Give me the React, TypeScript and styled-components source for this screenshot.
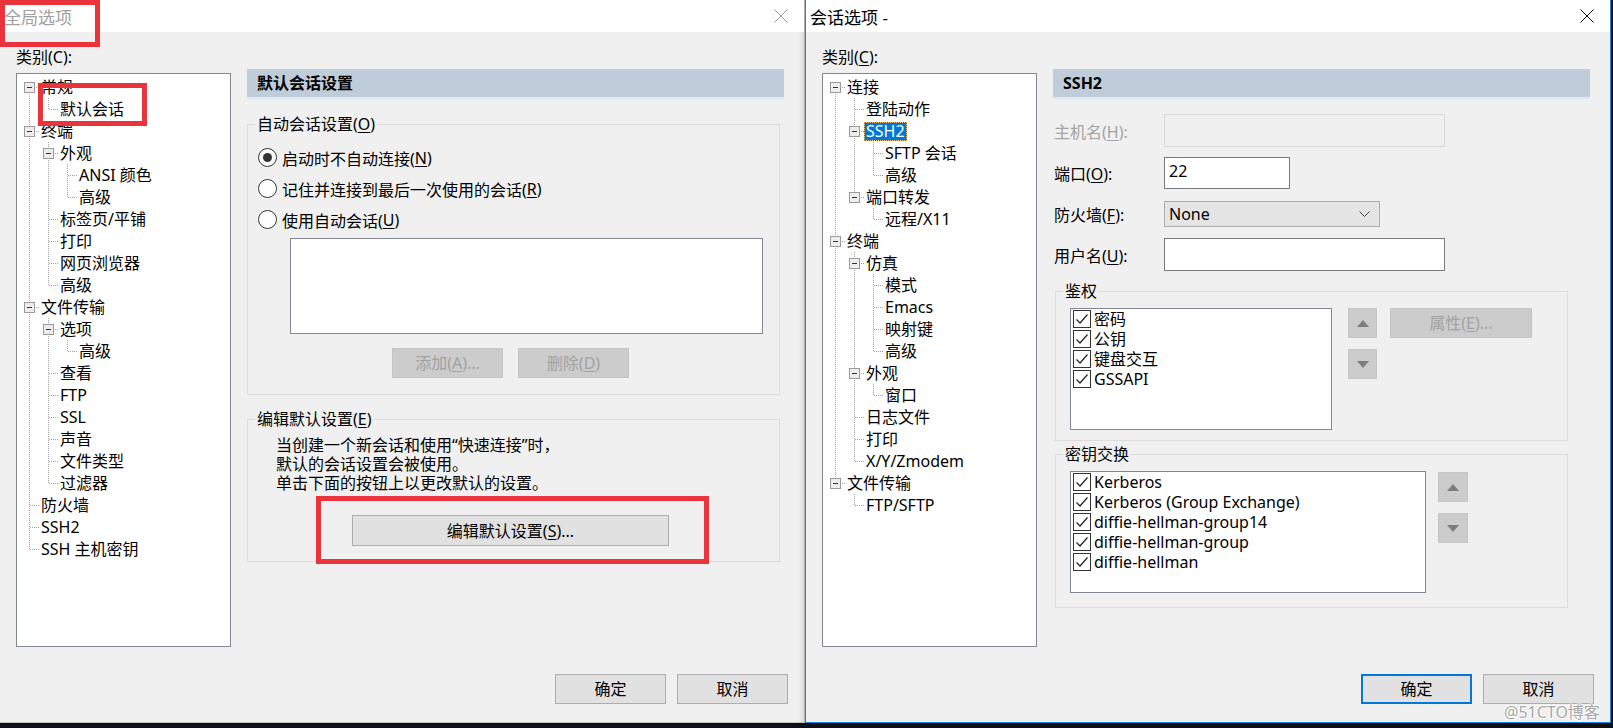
import React from "react";
import styled, { createGlobalStyle } from "styled-components";

const GlobalStyle = createGlobalStyle`
  html, body {
    margin: 0;
    padding: 0;
    background: #0e1016;
  }
  body {
    font-family: "Noto Sans", "Noto Sans CJK SC", sans-serif;
    font-size: 16px;
    color: #000;
  }
`;

type TreeNode = { label: string; children?: TreeNode[]; selected?: boolean; marked?: boolean };
type Link = "tee" | "last" | "first";
type FlatRow = {
  label: string;
  guides: boolean[];
  link: Link;
  open: boolean;
  selected?: boolean;
  marked?: boolean;
};

// turn the nested tree into rows with the guide lines each row needs
const flatten = (nodes: TreeNode[], guides: boolean[] = []): FlatRow[] =>
  nodes.flatMap((node, i) => {
    const last = i === nodes.length - 1;
    const link: Link = last ? "last" : guides.length === 0 && i === 0 ? "first" : "tee";
    const row: FlatRow = {
      label: node.label,
      guides,
      link,
      open: !!node.children,
      selected: node.selected,
      marked: node.marked,
    };
    return [row, ...(node.children ? flatten(node.children, [...guides, !last]) : [])];
  });

const globalTree: TreeNode[] = [
  { label: "常规", children: [{ label: "默认会话", marked: true }] },
  {
    label: "终端",
    children: [
      { label: "外观", children: [{ label: "ANSI 颜色" }, { label: "高级" }] },
      { label: "标签页/平铺" },
      { label: "打印" },
      { label: "网页浏览器" },
      { label: "高级" },
    ],
  },
  {
    label: "文件传输",
    children: [
      { label: "选项", children: [{ label: "高级" }] },
      { label: "查看" },
      { label: "FTP" },
      { label: "SSL" },
      { label: "声音" },
      { label: "文件类型" },
      { label: "过滤器" },
    ],
  },
  { label: "防火墙" },
  { label: "SSH2" },
  { label: "SSH 主机密钥" },
];

const sessionTree: TreeNode[] = [
  {
    label: "连接",
    children: [
      { label: "登陆动作" },
      { label: "SSH2", selected: true, children: [{ label: "SFTP 会话" }, { label: "高级" }] },
      { label: "端口转发", children: [{ label: "远程/X11" }] },
    ],
  },
  {
    label: "终端",
    children: [
      {
        label: "仿真",
        children: [{ label: "模式" }, { label: "Emacs" }, { label: "映射键" }, { label: "高级" }],
      },
      { label: "外观", children: [{ label: "窗口" }] },
      { label: "日志文件" },
      { label: "打印" },
      { label: "X/Y/Zmodem" },
    ],
  },
  { label: "文件传输", children: [{ label: "FTP/SFTP" }] },
];

const authMethods = ["密码", "公钥", "键盘交互", "GSSAPI"];
const kexMethods = [
  "Kerberos",
  "Kerberos (Group Exchange)",
  "diffie-hellman-group14",
  "diffie-hellman-group",
  "diffie-hellman",
];

const Screen = styled.div`
  position: relative;
  display: flex;
  width: 1613px;
  height: 728px;
  overflow: hidden;
`;

const Window = styled.div<{ $active?: boolean }>`
  flex: none;
  width: 806px;
  height: 723px;
  box-sizing: border-box;
  display: flex;
  flex-direction: column;
  background: #f0f0f0;
  border: 1px solid ${(p) => (p.$active ? "#1883d7" : "#c4c4c4")};
  border-top: none;
  box-shadow: ${(p) => (p.$active ? "-3px 0 5px rgba(0, 0, 0, 0.12)" : "none")};
  &:first-child {
    margin-left: -1px;
  }
`;

const TitleBar = styled.div<{ $active?: boolean }>`
  position: relative;
  flex: none;
  height: 32px;
  display: flex;
  align-items: center;
  padding-left: 4px;
  background: #fff;
  font-size: 17px;
  color: ${(p) => (p.$active ? "#000" : "#a0a0a0")};
`;

const CloseBox = styled.div<{ $active?: boolean }>`
  margin-left: auto;
  width: 46px;
  height: 32px;
  display: flex;
  align-items: center;
  justify-content: center;
  color: ${(p) => (p.$active ? "#111" : "#9a9a9a")};
`;

const RedMark = styled.div<{ $l: number; $t: number; $w: number; $h: number }>`
  position: absolute;
  left: ${(p) => p.$l}px;
  top: ${(p) => p.$t}px;
  width: ${(p) => p.$w}px;
  height: ${(p) => p.$h}px;
  box-sizing: border-box;
  border: 5px solid #e8343a;
  z-index: 5;
  pointer-events: none;
`;

const Body = styled.div`
  flex: none;
  display: grid;
  grid-template-columns: 215px 537px;
  column-gap: 16px;
  align-items: start;
  padding: 14px 0 0 16px;
`;

const CategoryLabel = styled.div`
  line-height: 22px;
  white-space: nowrap;
`;

const Key = styled.span`
  text-decoration: underline;
  text-underline-offset: 2px;
`;

const TreeBox = styled.div`
  margin-top: 5px;
  height: 574px;
  box-sizing: border-box;
  border: 1px solid #828790;
  background: #fff;
  padding: 2px 0 0 3px;
`;

const TreeRow = styled.div`
  position: relative;
  display: flex;
  height: 22px;
`;

const CellSvg = styled.svg`
  flex: none;
  display: block;
`;

const TreeLabel = styled.span<{ $selected?: boolean }>`
  margin-top: 2px;
  height: 19px;
  line-height: 19px;
  padding: 0 2px;
  white-space: nowrap;
  background: ${(p) => (p.$selected ? "#0078d7" : "transparent")};
  color: ${(p) => (p.$selected ? "#fff" : "#000")};
  outline: ${(p) => (p.$selected ? "1px dotted #f3c27c" : "none")};
  outline-offset: -1px;
`;

const Panel = styled.div`
  margin-top: 23px;
  display: flex;
  flex-direction: column;
  align-items: flex-start;
`;

const PanelHeader = styled.div`
  align-self: stretch;
  height: 28px;
  line-height: 28px;
  padding-left: 10px;
  background: #bfcddb;
  box-shadow: 0 2px 0 #dfe6ee;
  font-weight: 700;
`;

const Group = styled.fieldset<{ $top: number; $left?: number; $w: number }>`
  position: relative;
  margin: ${(p) => p.$top}px 0 0 ${(p) => p.$left ?? 0}px;
  padding: 0;
  min-width: 0;
  width: ${(p) => p.$w}px;
  box-sizing: border-box;
  border: 1px solid #dcdcdc;
`;

const GroupTitle = styled.legend`
  margin-left: 7px;
  padding: 0 2px;
  line-height: 22px;
  font-size: 16px;
`;

const GroupBody = styled.div<{ $pad: string }>`
  padding: ${(p) => p.$pad};
  display: flex;
  flex-direction: column;
  align-items: flex-start;
`;

const RadioRow = styled.div`
  display: flex;
  align-items: center;
  height: 31px;
  white-space: nowrap;
`;

const RadioDot = styled.span<{ $checked?: boolean }>`
  flex: none;
  width: 19px;
  height: 19px;
  box-sizing: border-box;
  margin-right: 5px;
  border: 1px solid #333;
  border-radius: 50%;
  background: #fff;
  display: grid;
  place-items: center;
  &::after {
    content: "";
    width: 9px;
    height: 9px;
    border-radius: 50%;
    background: ${(p) => (p.$checked ? "#333" : "transparent")};
  }
`;

const ListFrame = styled.div<{ $w: number; $h: number; $left?: number; $top?: number }>`
  flex: none;
  width: ${(p) => p.$w}px;
  height: ${(p) => p.$h}px;
  margin: ${(p) => p.$top ?? 0}px 0 0 ${(p) => p.$left ?? 0}px;
  box-sizing: border-box;
  border: 1px solid #828790;
  background: #fff;
  padding-left: 2px;
`;

const ButtonLine = styled.div<{ $left: number; $top: number; $gap: number }>`
  display: flex;
  gap: ${(p) => p.$gap}px;
  margin: ${(p) => p.$top}px 0 0 ${(p) => p.$left}px;
`;

const PushButton = styled.button<{ $w: number; $h?: number; $default?: boolean }>`
  flex: none;
  width: ${(p) => p.$w}px;
  height: ${(p) => p.$h ?? 30}px;
  box-sizing: border-box;
  padding: 0;
  font-family: inherit;
  font-size: 16px;
  line-height: 20px;
  color: #000;
  background: #e1e1e1;
  border: ${(p) => (p.$default ? "2px solid #0078d7" : "1px solid #adadad")};
  border-radius: 0;
  &:disabled {
    color: #a2a2a2;
    background: #cccccc;
    border-color: #c4c4c4;
  }
`;

const ButtonSlot = styled.div<{ $left: number; $top: number }>`
  position: relative;
  margin: ${(p) => p.$top}px 0 0 ${(p) => p.$left}px;
`;

const Note = styled.div`
  line-height: 19px;
  white-space: nowrap;
`;

const FormRow = styled.div<{ $top: number }>`
  display: grid;
  grid-template-columns: 111px auto;
  align-items: center;
  margin-top: ${(p) => p.$top}px;
`;

const FieldLabel = styled.div<{ $disabled?: boolean }>`
  padding-left: 1px;
  white-space: nowrap;
  color: ${(p) => (p.$disabled ? "#a3a3a3" : "#000")};
`;

const TextBox = styled.div<{ $w: number; $h: number; $disabled?: boolean }>`
  width: ${(p) => p.$w}px;
  height: ${(p) => p.$h}px;
  box-sizing: border-box;
  padding: 2px 4px;
  line-height: 22px;
  border: 1px solid ${(p) => (p.$disabled ? "#d9d9d9" : "#7a7a7a")};
  background: ${(p) => (p.$disabled ? "#f0f0f0" : "#fff")};
`;

const ComboBox = styled.div`
  width: 216px;
  height: 26px;
  box-sizing: border-box;
  display: flex;
  align-items: center;
  justify-content: space-between;
  padding: 0 9px 0 4px;
  border: 1px solid #acacac;
  background: #e5e5e5;
`;

const ListLine = styled.div`
  display: flex;
  align-items: flex-start;
`;

const ArrowStack = styled.div<{ $left: number; $top?: number }>`
  display: flex;
  flex-direction: column;
  gap: 11px;
  margin: ${(p) => p.$top ?? 0}px 0 0 ${(p) => p.$left}px;
`;

const ArrowButton = styled.div<{ $w: number }>`
  width: ${(p) => p.$w}px;
  height: 30px;
  box-sizing: border-box;
  display: grid;
  place-items: center;
  background: #cccccc;
  border: 1px solid #c6c6c6;
`;

const CheckRow = styled.div`
  display: flex;
  align-items: center;
  height: 20px;
  line-height: 20px;
  white-space: nowrap;
`;

const CheckBox = styled.span`
  flex: none;
  width: 18px;
  height: 18px;
  box-sizing: border-box;
  margin-right: 3px;
  border: 1px solid #333;
  background: #fff;
  display: grid;
  place-items: center;
`;

const Footer = styled.div`
  margin-top: auto;
  display: flex;
  justify-content: flex-end;
  gap: 11px;
  padding: 0 16px 18px 0;
`;

const Watermark = styled.div`
  position: absolute;
  left: 1504px;
  top: 701px;
  font-size: 16px;
  line-height: 22px;
  color: #a6a6a6;
  text-shadow: 1px 0 0 #fff, -1px 0 0 #fff, 0 1px 0 #fff, 0 -1px 0 #fff;
  z-index: 10;
`;

const DOT = {
  stroke: "#a0a0a0",
  strokeDasharray: "1 1",
  shapeRendering: "crispEdges" as const,
};

const GuideCell = ({ pipe, link, open }: { pipe?: boolean; link?: Link; open?: boolean }) => (
  <CellSvg width="19" height="22" viewBox="0 0 19 22">
    {(pipe || link === "tee") && <line x1="9.5" y1="0" x2="9.5" y2="22" {...DOT} />}
    {link === "last" && <line x1="9.5" y1="0" x2="9.5" y2="11" {...DOT} />}
    {link === "first" && <line x1="9.5" y1="12" x2="9.5" y2="22" {...DOT} />}
    {link && <line x1="10" y1="11.5" x2="19" y2="11.5" {...DOT} />}
    {open && (
      <>
        <rect x="4.5" y="6.5" width="10" height="10" fill="#ededed" stroke="#9a9a9a" shapeRendering="crispEdges" />
        <line x1="7" y1="11.5" x2="12" y2="11.5" stroke="#333" shapeRendering="crispEdges" />
      </>
    )}
  </CellSvg>
);

const Tree = ({ nodes }: { nodes: TreeNode[] }) => (
  <TreeBox>
    {flatten(nodes).map((r, i) => (
      <TreeRow key={i}>
        {r.guides.map((g, j) => (
          <GuideCell key={j} pipe={g} />
        ))}
        <GuideCell link={r.link} open={r.open} />
        <TreeLabel $selected={r.selected}>{r.label}</TreeLabel>
        {r.marked && <RedMark $l={18} $t={-15} $w={109} $h={43} />}
      </TreeRow>
    ))}
  </TreeBox>
);

const CheckMark = () => (
  <svg width="14" height="14" viewBox="0 0 14 14">
    <path d="M1.5 7.5 L5 11 L12.5 2.5" fill="none" stroke="#222" strokeWidth="1.2" />
  </svg>
);

const CheckList = ({ items, width }: { items: string[]; width: number }) => (
  <ListFrame $w={width} $h={122}>
    {items.map((item) => (
      <CheckRow key={item}>
        <CheckBox>
          <CheckMark />
        </CheckBox>
        {item}
      </CheckRow>
    ))}
  </ListFrame>
);

const Arrow = ({ up }: { up?: boolean }) => (
  <svg width="12" height="7" viewBox="0 0 12 7">
    <path d={up ? "M0 7 L6 0 L12 7 Z" : "M0 0 L12 0 L6 7 Z"} fill="#7e7e7e" />
  </svg>
);

const Arrows = ({ left, top, w }: { left: number; top?: number; w: number }) => (
  <ArrowStack $left={left} $top={top}>
    <ArrowButton $w={w}>
      <Arrow up />
    </ArrowButton>
    <ArrowButton $w={w}>
      <Arrow />
    </ArrowButton>
  </ArrowStack>
);

const CloseIcon = () => (
  <svg width="14" height="14" viewBox="0 0 14 14">
    <path d="M0.5 0.5 L13.5 13.5 M13.5 0.5 L0.5 13.5" stroke="currentColor" strokeWidth="1" />
  </svg>
);

const Chevron = () => (
  <svg width="11" height="6" viewBox="0 0 11 6">
    <path d="M0.5 0.5 L5.5 5.5 L10.5 0.5" fill="none" stroke="#444" strokeWidth="1" />
  </svg>
);

type DialogProps = {
  title: string;
  active?: boolean;
  marked?: boolean;
  tree: TreeNode[];
  children: React.ReactNode;
};

const Dialog = ({ title, active, marked, tree, children }: DialogProps) => (
  <Window $active={active}>
    <TitleBar $active={active}>
      {title}
      <CloseBox $active={active}>
        <CloseIcon />
      </CloseBox>
      {marked && <RedMark $l={0} $t={0} $w={100} $h={47} />}
    </TitleBar>
    <Body>
      <div>
        <CategoryLabel>
          类别({active ? <Key>C</Key> : "C"}):
        </CategoryLabel>
        <Tree nodes={tree} />
      </div>
      <Panel>{children}</Panel>
    </Body>
    <Footer>
      <PushButton $w={111} $default={active}>
        确定
      </PushButton>
      <PushButton $w={111}>取消</PushButton>
    </Footer>
  </Window>
);

const DefaultSessionPanel = () => (
  <>
    <PanelHeader>默认会话设置</PanelHeader>
    <Group $top={16} $w={533}>
      <GroupTitle>
        自动会话设置(<Key>O</Key>)
      </GroupTitle>
      <GroupBody $pad="7px 0 16px 10px">
        <RadioRow>
          <RadioDot $checked />
          启动时不自动连接(<Key>N</Key>)
        </RadioRow>
        <RadioRow>
          <RadioDot />
          记住并连接到最后一次使用的会话(<Key>R</Key>)
        </RadioRow>
        <RadioRow>
          <RadioDot />
          使用自动会话(<Key>U</Key>)
        </RadioRow>
        <ListFrame $w={473} $h={96} $left={32} $top={3} />
        <ButtonLine $left={134} $top={14} $gap={15}>
          <PushButton $w={111} disabled>
            添加(<Key>A</Key>)...
          </PushButton>
          <PushButton $w={111} disabled>
            删除(<Key>D</Key>)
          </PushButton>
        </ButtonLine>
      </GroupBody>
    </Group>
    <Group $top={13} $w={533}>
      <GroupTitle>
        编辑默认设置(<Key>E</Key>)
      </GroupTitle>
      <GroupBody $pad="6px 0 15px 28px">
        <Note>
          当创建一个新会话和使用“快速连接”时，
          <br />
          默认的会话设置会被使用。
          <br />
          单击下面的按钮上以更改默认的设置。
        </Note>
        <ButtonSlot $left={76} $top={22}>
          <PushButton $w={317} $h={31}>
            编辑默认设置(<Key>S</Key>)...
          </PushButton>
          <RedMark $l={-36} $t={-19} $w={393} $h={68} />
        </ButtonSlot>
      </GroupBody>
    </Group>
  </>
);

const Ssh2Panel = () => (
  <>
    <PanelHeader>SSH2</PanelHeader>
    <FormRow $top={17}>
      <FieldLabel $disabled>
        主机名(<Key>H</Key>):
      </FieldLabel>
      <TextBox $w={281} $h={33} $disabled />
    </FormRow>
    <FormRow $top={10}>
      <FieldLabel>
        端口(<Key>O</Key>):
      </FieldLabel>
      <TextBox $w={126} $h={32}>
        22
      </TextBox>
    </FormRow>
    <FormRow $top={12}>
      <FieldLabel>
        防火墙(<Key>F</Key>):
      </FieldLabel>
      <ComboBox>
        None
        <Chevron />
      </ComboBox>
    </FormRow>
    <FormRow $top={11}>
      <FieldLabel>
        用户名(<Key>U</Key>):
      </FieldLabel>
      <TextBox $w={281} $h={33} />
    </FormRow>
    <Group $top={9} $left={2} $w={513}>
      <GroupTitle>鉴权</GroupTitle>
      <GroupBody $pad="6px 0 10px 14px">
        <ListLine>
          <CheckList items={authMethods} width={262} />
          <Arrows left={16} w={29} />
          <ButtonLine $left={13} $top={0} $gap={0}>
            <PushButton $w={142} disabled>
              属性(<Key>E</Key>)...
            </PushButton>
          </ButtonLine>
        </ListLine>
      </GroupBody>
    </Group>
    <Group $top={2} $left={2} $w={513}>
      <GroupTitle>密钥交换</GroupTitle>
      <GroupBody $pad="6px 0 14px 14px">
        <ListLine>
          <CheckList items={kexMethods} width={356} />
          <Arrows left={12} top={1} w={30} />
        </ListLine>
      </GroupBody>
    </Group>
  </>
);

export default function App() {
  return (
    <>
      <GlobalStyle />
      <Screen>
        <Dialog title="全局选项" marked tree={globalTree}>
          <DefaultSessionPanel />
        </Dialog>
        <Dialog title="会话选项 -" active tree={sessionTree}>
          <Ssh2Panel />
        </Dialog>
        <Watermark>@51CTO博客</Watermark>
      </Screen>
    </>
  );
}
